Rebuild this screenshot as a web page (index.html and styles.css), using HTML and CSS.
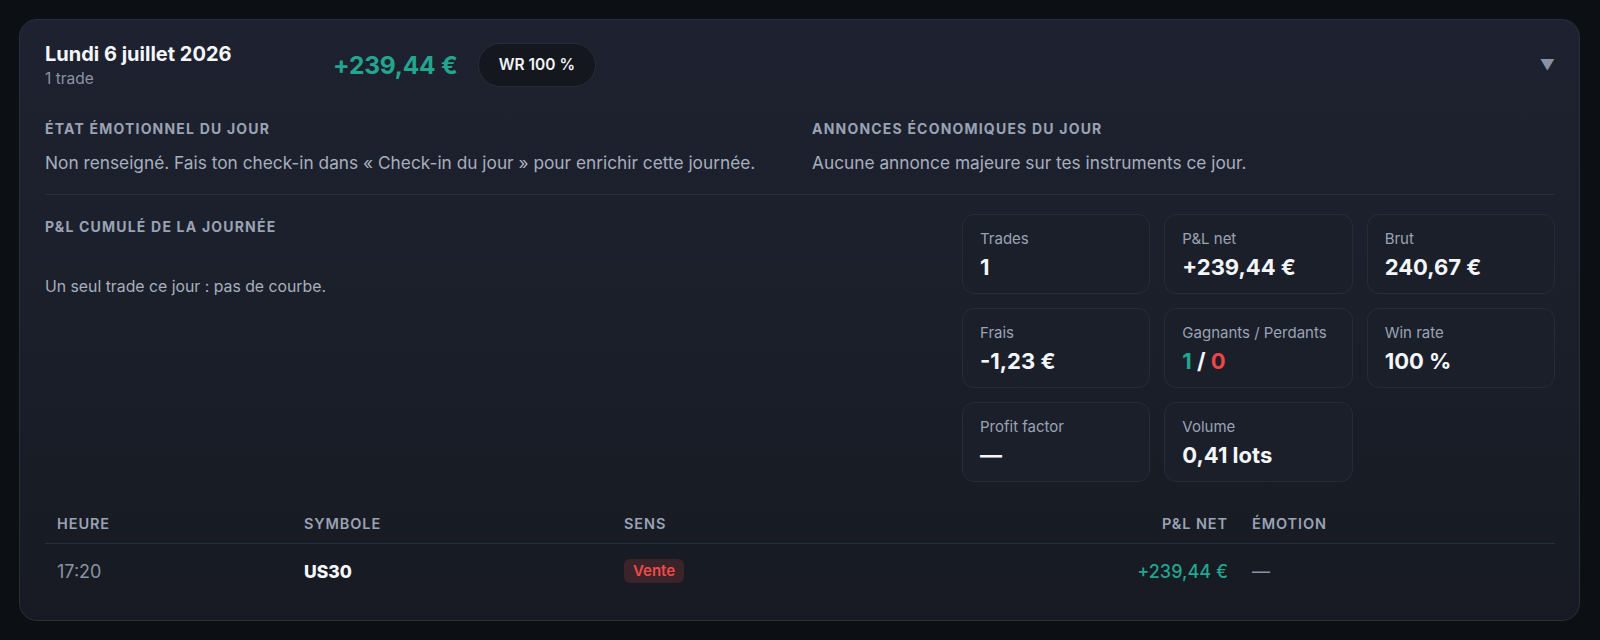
FILE: index.html
```html
<!DOCTYPE html>
<html lang="fr">
<head>
<meta charset="utf-8">
<title>Journal — Lundi 6 juillet 2026</title>
<link rel="stylesheet" href="styles.css">
</head>
<body>
<main class="page">
  <section class="day-card">
    <header class="day-head">
      <div class="day-title">
        <h2>Lundi 6 juillet 2026</h2>
        <p>1 trade</p>
      </div>
      <span class="day-pnl positive">+239,44 €</span>
      <span class="wr-pill">WR 100 %</span>
      <span class="chevron">▼</span>
    </header>

    <div class="notes">
      <div class="note">
        <h3 class="section-label">État émotionnel du jour</h3>
        <p>Non renseigné. Fais ton check-in dans « Check-in du jour » pour enrichir cette journée.</p>
      </div>
      <div class="note">
        <h3 class="section-label">Annonces économiques du jour</h3>
        <p>Aucune annonce majeure sur tes instruments ce jour.</p>
      </div>
    </div>

    <div class="overview">
      <div class="curve">
        <h3 class="section-label">P&amp;L cumulé de la journée</h3>
        <p class="curve-empty">Un seul trade ce jour : pas de courbe.</p>
      </div>
      <div class="stats">
        <div class="stat"><span class="stat-label">Trades</span><span class="stat-value">1</span></div>
        <div class="stat"><span class="stat-label">P&amp;L net</span><span class="stat-value positive">+239,44 €</span></div>
        <div class="stat"><span class="stat-label">Brut</span><span class="stat-value">240,67 €</span></div>
        <div class="stat"><span class="stat-label">Frais</span><span class="stat-value">-1,23 €</span></div>
        <div class="stat"><span class="stat-label">Gagnants / Perdants</span><span class="stat-value"><span class="positive">1</span> / <span class="negative">0</span></span></div>
        <div class="stat"><span class="stat-label">Win rate</span><span class="stat-value">100 %</span></div>
        <div class="stat"><span class="stat-label">Profit factor</span><span class="stat-value">—</span></div>
        <div class="stat"><span class="stat-label">Volume</span><span class="stat-value">0,41 lots</span></div>
      </div>
    </div>

    <div class="trades">
      <div class="trade-row trade-headrow">
        <span>Heure</span>
        <span>Symbole</span>
        <span>Sens</span>
        <span class="num">P&amp;L net</span>
        <span>Émotion</span>
      </div>
      <div class="trade-row">
        <span class="time">17:20</span>
        <span class="symbol">US30</span>
        <span><span class="side sell">Vente</span></span>
        <span class="num positive">+239,44 €</span>
        <span class="muted">—</span>
      </div>
    </div>
  </section>
</main>
</body>
</html>
```

FILE: styles.css
```css
* { box-sizing: border-box; }

html, body {
  margin: 0;
  height: 100%;
}

body {
  background: #0c0f14;
  font-family: Inter, "Noto Sans", "Liberation Sans", sans-serif;
  color: #e8ebf1;
}

h2, h3, p { margin: 0; }

.page {
  padding: 19px 20px 0 19px;
}

.positive { color: #22a68f; }
.negative { color: #ef4646; }
.muted { color: #8a93a5; }

/* Day card */
.day-card {
  border: 1px solid #2a2f3b;
  border-radius: 18px;
  background: linear-gradient(180deg, #1e2230 0%, #1b1f2a 50%, #171a22 100%);
  padding: 20px 24px 22px 25px;
}

.day-head {
  display: flex;
  align-items: center;
  gap: 20px;
}

.day-title {
  min-width: 268px;
}

.day-title h2 {
  font-size: 20px;
  line-height: 28px;
  font-weight: 700;
  color: #f4f6fa;
}

.day-title p {
  margin-top: 1px;
  font-size: 15.5px;
  line-height: 20px;
  color: #8a93a5;
}

.day-pnl {
  font-size: 24.5px;
  font-weight: 700;
  letter-spacing: -0.2px;
}

.wr-pill {
  display: inline-flex;
  align-items: center;
  height: 44px;
  padding: 0 20px;
  border-radius: 22px;
  background: #14171d;
  border: 1px solid #272c36;
  font-size: 15.5px;
  font-weight: 600;
  color: #f1f3f7;
}

.chevron {
  margin-left: auto;
  font-size: 15px;
  color: #8a93a5;
}

/* Section labels */
.section-label {
  font-size: 14px;
  line-height: 17px;
  font-weight: 700;
  text-transform: uppercase;
  letter-spacing: 1.2px;
  color: #9aa3b4;
}

.notes {
  display: grid;
  grid-template-columns: 1fr 1fr;
  gap: 24px;
  margin-top: 31px;
  padding-bottom: 19px;
  border-bottom: 1px solid #283040;
}

.note p {
  margin-top: 14px;
  font-size: 17.3px;
  line-height: 24px;
  color: #a7afbe;
}

/* Overview: curve + stats */
.overview {
  display: grid;
  grid-template-columns: 1fr 593px;
  gap: 24px;
  padding-top: 19px;
}

.curve {
  padding-top: 4px;
}

.curve-empty {
  margin-top: 42px;
  font-size: 15.8px;
  line-height: 20px;
  color: #a7afbe;
}

.stats {
  display: grid;
  grid-template-columns: repeat(3, 1fr);
  gap: 14px;
}

.stat {
  display: flex;
  flex-direction: column;
  height: 80px;
  padding: 15px 17px;
  border-radius: 12px;
  background: #1b1f2a;
  border: 1px solid #262b37;
}

.stat-label {
  font-size: 15px;
  line-height: 18px;
  color: #9aa3b4;
}

.stat-value {
  margin-top: 6px;
  font-size: 22px;
  line-height: 26px;
  font-weight: 700;
  color: #f4f6fa;
}

/* Trades table */
.trades {
  margin-top: 23px;
}

.trade-row {
  display: grid;
  grid-template-columns: 247px 320px 1fr 200px 315px;
  align-items: center;
}

.trade-row > span {
  padding: 0 12px;
}

.trade-row .num {
  text-align: right;
}

.trade-headrow {
  height: 39px;
  padding-bottom: 2px;
  border-bottom: 1px solid #283040;
  font-size: 14.5px;
  font-weight: 600;
  text-transform: uppercase;
  letter-spacing: 0.9px;
  color: #9aa3b4;
}

.trade-row:not(.trade-headrow) {
  height: 54px;
  font-size: 18px;
}

.time {
  color: #8a93a5;
}

.symbol {
  font-weight: 800;
  font-size: 17.5px;
  color: #f6f8fb;
}

.side {
  display: inline-block;
  padding: 2px 9px;
  border-radius: 6px;
  font-size: 15px;
  line-height: 20px;
  font-weight: 600;
}

.side.sell {
  background: #3a2329;
  color: #ef4a4a;
}

.trade-row .num.positive {
  font-weight: 500;
}
```
